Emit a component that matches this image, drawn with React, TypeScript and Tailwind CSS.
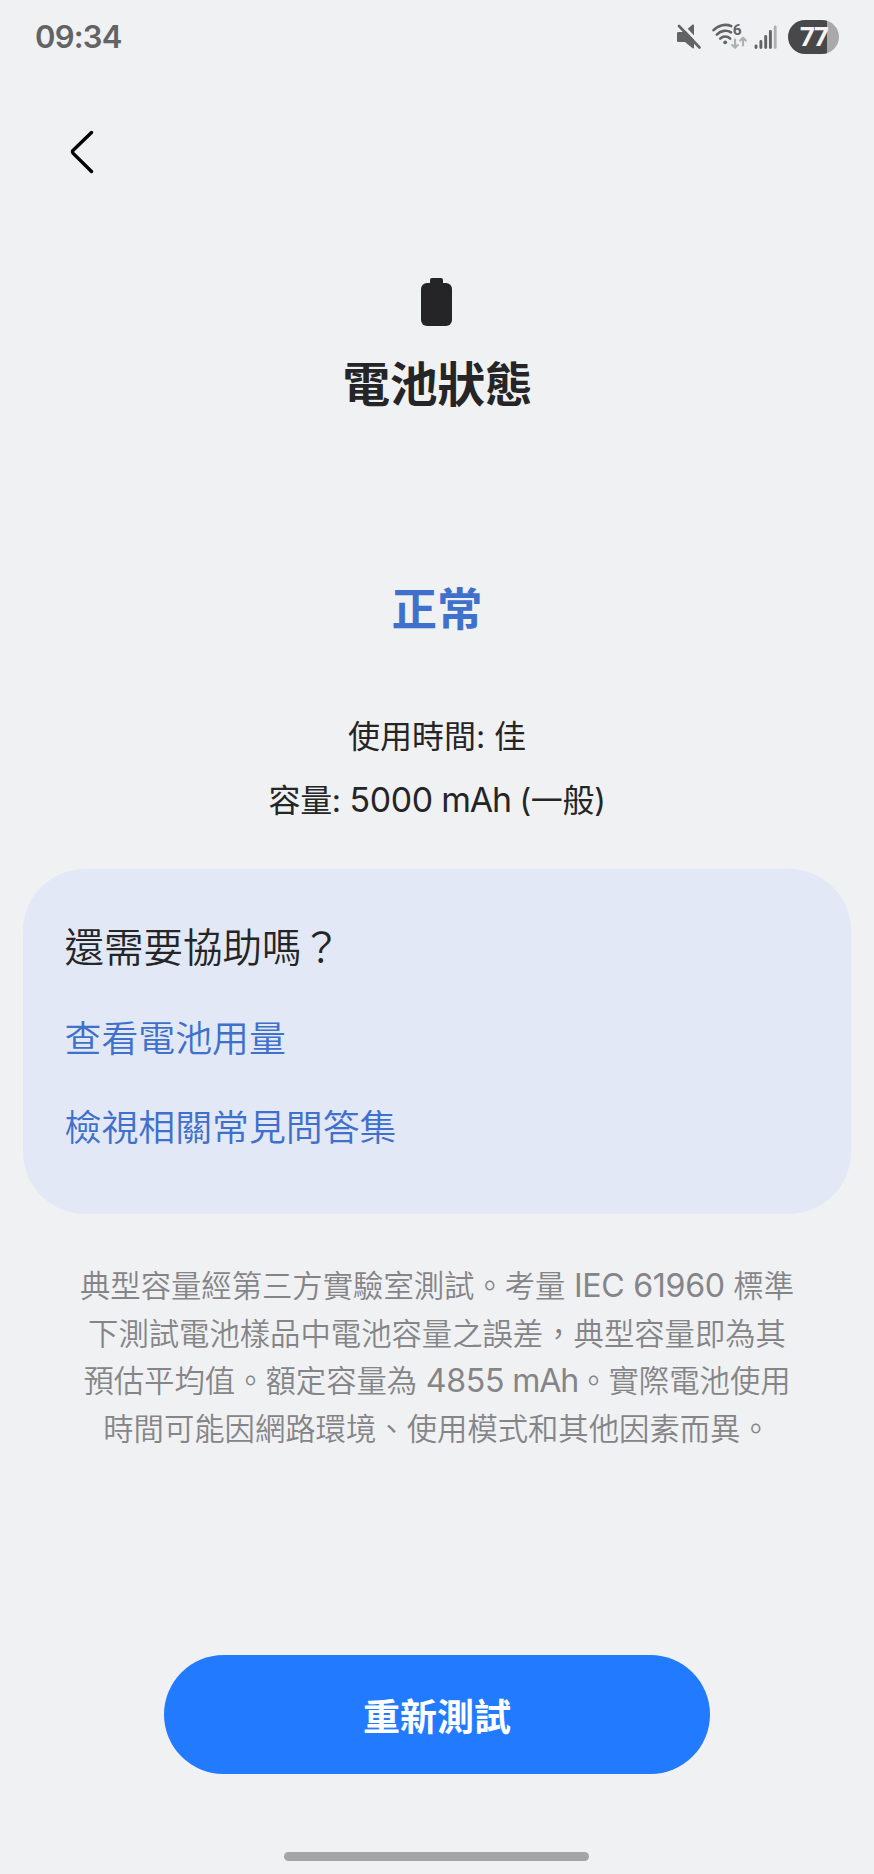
import type { ReactNode } from 'react';

function Latin({ children }: { children: ReactNode }) {
  return <span className="text-[1.06em] leading-none font-normal tracking-[-0.01em]">{children}</span>;
}

function Unit() {
  return <span className="text-[1.06em] leading-none font-normal tracking-[-0.035em]"> mAh</span>;
}

function MuteIcon() {
  return (
    <svg width="24" height="26" viewBox="0 0 24 26" fill="none">
      <path d="M0 9.3Q0 8 1.3 8H7L15.6 0.6Q17 0 17 1.5V23.5Q17 25 15.6 24.2L8 18H1.3Q0 18 0 16.7Z" fill="#636365" />
      <path d="M3.6 -0.5L25 22" stroke="#f0f1f3" strokeWidth="3" />
      <path d="M2 2L22.5 23.5" stroke="#636365" strokeWidth="2.6" strokeLinecap="round" />
    </svg>
  );
}

function WifiIcon() {
  return (
    <svg className="overflow-visible" width="36" height="28" viewBox="0 0 36 28" fill="none">
      <g stroke="#636365" strokeWidth="2.6" strokeLinecap="round">
        <path d="M1.5 7.2C6.5 1.8 14 0.6 19.2 3.2" />
        <path d="M4.8 11.6C9 7.2 15 6.8 19 9.4" />
        <path d="M8.2 15.6C11 12.8 15.5 12.8 18.2 15.6" />
      </g>
      <circle cx="13.2" cy="19.3" r="1.9" fill="#636365" />
      <text x="20.8" y="12.2" fontFamily="Roboto, sans-serif" fontSize="15.5" fontWeight="700" fill="#636365">6</text>
      <g stroke="#b0b0b2" strokeWidth="2.2" strokeLinecap="round" strokeLinejoin="round">
        <path d="M23 16.5V24.5M20.2 22L23 24.8L25.8 22" />
        <path d="M31 22.5V15M28.2 17.5L31 14.7L33.8 17.5" />
      </g>
    </svg>
  );
}

function SignalIcon() {
  return (
    <svg width="23" height="25" viewBox="0 0 23 25" strokeWidth="2.9" strokeLinecap="round">
      <path d="M2 21V22.5M6.9 16.5V22.5M11.7 11.5V22.5M16.4 6.5V22.5" stroke="#636365" />
      <path d="M21.2 2V22.5" stroke="#b0b0b2" />
    </svg>
  );
}

function StatusBar() {
  return (
    <div className="flex h-[74px] items-center justify-between pr-[35px] pl-[35px]">
      <span className="pt-[1px] text-[31px] font-semibold tracking-[-0.025em] text-[#636365]">09:34</span>
      <div className="flex items-center">
        <MuteIcon />
        <div className="ml-[11px]">
          <WifiIcon />
        </div>
        <div className="ml-[6px]">
          <SignalIcon />
        </div>
        <div className="ml-[11px] flex h-[34px] w-[51px] items-center justify-center rounded-full bg-linear-to-r from-[#48484a] from-77% to-[#a9a9ab] to-77%">
          <span className="text-[26px] leading-none font-bold tracking-[-0.06em] text-[#f4f4f6]">77</span>
        </div>
      </div>
    </div>
  );
}

export default function App() {
  return (
    <div className="flex h-[1874px] w-[874px] flex-col bg-[#f0f1f3] font-['Inter','Noto_Sans_CJK_TC',sans-serif] text-[#252527]" lang="zh-Hant">
      <StatusBar />

      {/* Back */}
      <div className="flex h-[154px] items-center pl-[70px]">
        <button aria-label="返回" className="pt-[1px]">
          <svg width="24" height="44" viewBox="0 0 24 44" fill="none" stroke="#000" strokeWidth="3.4" strokeLinecap="round" strokeLinejoin="round">
            <path d="M21.5 2.5L3.2 20.2Q1.8 21.8 3.2 23.4L21.5 41.5" />
          </svg>
        </button>
      </div>

      {/* Title */}
      <div className="flex flex-col items-center pt-[50px]">
        <svg className="-ml-px" width="31" height="48" viewBox="0 0 31 48" fill="#252527">
          <rect x="9" y="0" width="13" height="10" rx="2" />
          <rect x="0" y="5" width="31" height="43" rx="6" />
        </svg>
        <h1 className="mt-[29px] pl-px text-[47.5px] leading-[60px] font-bold">電池狀態</h1>
      </div>

      {/* Result */}
      <div className="mt-[167px] flex flex-col items-center">
        <p className="text-[45.5px] leading-[56px] font-bold text-[#3e70cc]">正常</p>
        <div className="mt-[67px] text-center text-[32px] leading-[64px]">
          <p>使用時間: 佳</p>
          <p className="tracking-[-0.01em]">
            容量: <Latin>5000</Latin>
            <Unit /> (一般)
          </p>
        </div>
      </div>

      {/* Help card */}
      <section className="mx-[23px] mt-[36px] h-[345px] rounded-[62px] bg-[#e2e8f5] pt-[49px] pl-[41.5px] font-[350]">
        <h2 className="text-[39.5px] leading-[60px]">還需要協助嗎？</h2>
        <div className="mt-[16px] flex flex-col text-[36.9px] leading-[89px] text-[#3e70cc]">
          <a>查看電池用量</a>
          <a>檢視相關常見問答集</a>
        </div>
      </section>

      <div className="mt-[49px] text-center text-[30.35px] leading-[47.5px] font-[350] whitespace-nowrap text-[#858588]">
        <p>
          典型容量經第三方實驗室測試。考量 <Latin>IEC 61960</Latin> 標準
        </p>
        <p>下測試電池樣品中電池容量之誤差，典型容量即為其</p>
        <p>
          預估平均值。額定容量為 <Latin>4855</Latin>
          <Unit />。實際電池使用
        </p>
        <p>時間可能因網路環境、使用模式和其他因素而異。</p>
      </div>

      <button className="mx-auto mt-[202px] h-[119px] w-[546px] rounded-full bg-[#227aff] pt-[7px] text-[37px] font-bold text-white">
        重新測試
      </button>

      {/* Gesture bar */}
      <div className="mt-[78px] ml-[284px] h-[9px] w-[305px] rounded-full bg-[#a5a5a7]" />
    </div>
  );
}
